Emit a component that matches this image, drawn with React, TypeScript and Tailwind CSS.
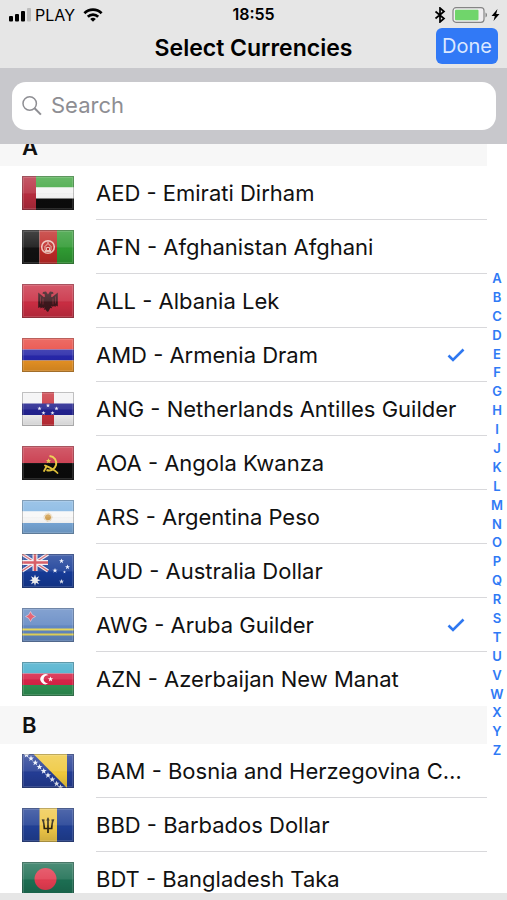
import { useId, useState } from 'react';
import type { ReactNode } from 'react';

interface Currency {
  code: string;
  name: string;
}

interface Section {
  letter: string;
  currencies: Currency[];
}

const SECTIONS: Section[] = [
  {
    letter: 'A',
    currencies: [
      { code: 'AED', name: 'Emirati Dirham' },
      { code: 'AFN', name: 'Afghanistan Afghani' },
      { code: 'ALL', name: 'Albania Lek' },
      { code: 'AMD', name: 'Armenia Dram' },
      { code: 'ANG', name: 'Netherlands Antilles Guilder' },
      { code: 'AOA', name: 'Angola Kwanza' },
      { code: 'ARS', name: 'Argentina Peso' },
      { code: 'AUD', name: 'Australia Dollar' },
      { code: 'AWG', name: 'Aruba Guilder' },
      { code: 'AZN', name: 'Azerbaijan New Manat' },
    ],
  },
  {
    letter: 'B',
    currencies: [
      { code: 'BAM', name: 'Bosnia and Herzegovina Convertible Marka' },
      { code: 'BBD', name: 'Barbados Dollar' },
      { code: 'BDT', name: 'Bangladesh Taka' },
    ],
  },
];

const LETTERS = 'ABCDEFGHIJKLMNOPQRSTUVWXYZ'.split('');

const STAR = 'M0-3 .8-1 3-.9 1.2.4 1.9 2.6 0 1.3-1.9 2.6-1.2.4-3-.9-.8-1z';

// All flags are drawn on a 52x34 canvas
const FLAGS: Record<string, ReactNode> = {
  AED: (
    <>
      <path d="M14 0h38v11.5H14z" fill="#3fa63f" />
      <path d="M14 11.5h38v11H14z" fill="#f4f4f4" />
      <path d="M14 22.5h38V34H14z" fill="#0c0c0c" />
      <path d="M0 0h14v34H0z" fill="#b52b3d" />
    </>
  ),
  AFN: (
    <>
      <path d="M0 0h17.5v34H0z" fill="#111" />
      <path d="M17.5 0H35v34H17.5z" fill="#bf2a27" />
      <path d="M35 0h17v34H35z" fill="#2f9a32" />
      <g fill="none" stroke="#efc4bc">
        <circle cx="26" cy="17" r="6.3" strokeWidth="1.6" />
        <path d="M23 20.5v-4l3-3 3 3v4zM24.5 20.5v-3h3v3M22.5 21.5h7M26 11.5v2" strokeWidth="1" />
      </g>
    </>
  ),
  ALL: (
    <>
      <path d="M0 0h52v34H0z" fill="#c92d42" />
      <path
        d="M26 10.500L24 7.500l-3 .5-.5 1.800 2 .2.500 2.500-1 .8-5.800-4.800v15.500l2-1 .3 1.500 2-1.300.3 1.300 2-1.200-1 2.500 2-.3.700 1.500L26 28l1.500-2.500.7-1.500 2 .3-1-2.500 2 1.200.3-1.300 2 1.300.3-1.500 2 1V8.500L30 13.300l-1-.8.5-2.500 2-.2L31 8l-3-.5z"
        fill="#3b171c"
      />
      <path d="M18.500 12.500v7M21 14.500v6M33.500 12.500v7M31 14.500v6" stroke="#8f2b38" strokeWidth=".7" />
    </>
  ),
  AMD: (
    <>
      <path d="M0 0h52v11.5H0z" fill="#e8443c" />
      <path d="M0 11.5h52v11H0z" fill="#2626a8" />
      <path d="M0 22.5h52V34H0z" fill="#ea9424" />
    </>
  ),
  ANG: (
    <>
      <path d="M0 0h52v34H0z" fill="#f3f3f4" />
      <path d="M20 0h12v34H20z" fill="#c8303a" />
      <path d="M0 11.5h52v11.5H0z" fill="#22228e" />
      <g fill="#e8e8fa">
        <path d={STAR} transform="translate(26 13.5) scale(.7)" />
        <path d={STAR} transform="translate(17.5 16.5) scale(.7)" />
        <path d={STAR} transform="translate(34.5 16.5) scale(.7)" />
        <path d={STAR} transform="translate(21.5 21) scale(.7)" />
        <path d={STAR} transform="translate(30.5 21) scale(.7)" />
      </g>
    </>
  ),
  AOA: (
    <>
      <path d="M0 0h52v17H0z" fill="#c62f42" />
      <path d="M0 17h52v17H0z" fill="#0b0b0b" />
      <path d="M27.5 10c5 .5 7.500 4.500 6.500 9-1 4-5 6.500-9.500 5" fill="none" stroke="#e9c93c" strokeWidth="2" />
      <path d="M23 19.500c3 1.200 9 3.500 12.500 7.500M24.500 20.500L22 25" fill="none" stroke="#e9c93c" strokeWidth="1.800" strokeLinecap="round" />
      <path d={STAR} fill="#e9c93c" transform="translate(26.500 15) scale(.9)" />
    </>
  ),
  ARS: (
    <>
      <path d="M0 0h52v11.500H0z" fill="#82b5e2" />
      <path d="M0 11.500h52v11.500H0z" fill="#f7f7f7" />
      <path d="M0 23h52v11H0z" fill="#79a9da" />
      <circle cx="26" cy="17.200" r="3" fill="#d3a254" />
      <circle cx="26" cy="17.200" r="3.900" fill="none" stroke="#dcb981" strokeWidth="1" strokeDasharray=".8 .7" />
    </>
  ),
  AUD: (
    <>
      <path d="M0 0h52v34H0z" fill="#153a96" />
      <path d="M0 0l26 17M26 0L0 17" stroke="#eceaf2" strokeWidth="3.400" />
      <path d="M0 0l26 17M26 0L0 17" stroke="#d25560" strokeWidth="1.200" />
      <path d="M13 0v17M0 8.500h26" stroke="#f0eef4" strokeWidth="5" />
      <path d="M13 0v17M0 8.500h26" stroke="#d0424c" strokeWidth="2.600" />
      <path d="M13 20.500l1 3.200 3-1.500-1.500 3 3.200 1-3.200 1 1.500 3-3-1.500-1 3.200-1-3.200-3 1.500 1.500-3-3.200-1 3.200-1-1.500-3 3 1.500z" fill="#fff" />
      <g fill="#eef2ff">
        <path d={STAR} transform="translate(39.500 7) scale(.85)" />
        <path d={STAR} transform="translate(45.500 13) scale(.85)" />
        <path d={STAR} transform="translate(33 16.500) scale(.85)" />
        <path d={STAR} transform="translate(39.500 27.500) scale(.85)" />
        <path d={STAR} transform="translate(42.500 18) scale(.5)" />
      </g>
    </>
  ),
  AWG: (
    <>
      <path d="M0 0h52v34H0z" fill="#6389c4" />
      <path d="M0 21.500h52M0 26.500h52" stroke="#ecdc5c" strokeWidth="2" />
      <path d="M8.500 3.500l1.800 3.200 3.200 1.800-3.200 1.800-1.800 3.200-1.800-3.200-3.200-1.800 3.200-1.800z" fill="#e0475a" stroke="#dfc3d4" strokeWidth=".7" />
    </>
  ),
  AZN: (
    <>
      <path d="M0 0h52v11.500H0z" fill="#41abca" />
      <path d="M0 11.500h52v11.500H0z" fill="#d72347" />
      <path d="M0 23h52v11H0z" fill="#2f9254" />
      <path d="M26.500 13.300a5 5 0 1 0 0 7.800 4 4 0 1 1 0-7.800z" fill="#fff" />
      <path d={STAR} fill="#fff" transform="translate(28.500 17.200) scale(.9)" />
    </>
  ),
  BAM: (
    <>
      <path d="M0 0h52v34H0z" fill="#233c94" />
      <path d="M11.500 0H45v34z" fill="#efc83c" />
      <g fill="#edf1fc">
        <path d={STAR} transform="translate(4.500 1)" />
        <path d={STAR} transform="translate(9 4.500)" />
        <path d={STAR} transform="translate(13.300 8.700)" />
        <path d={STAR} transform="translate(17.500 12.900)" />
        <path d={STAR} transform="translate(21.700 17.100)" />
        <path d={STAR} transform="translate(26 21.300)" />
        <path d={STAR} transform="translate(30.300 25.500)" />
        <path d={STAR} transform="translate(34.600 29.700)" />
        <path d={STAR} transform="translate(38.500 33.300)" />
      </g>
    </>
  ),
  BBD: (
    <>
      <path d="M0 0h52v34H0z" fill="#203f94" />
      <path d="M17.500 0H35v34H17.500z" fill="#efc747" />
      <path d="M26 10.500V25M20.500 12c1.500 1.500 1.500 4 1.800 8.500H29.700c.3-4.500.3-7 1.800-8.500" fill="none" stroke="#2d2512" strokeWidth="1.700" />
      <path d="M26 9l-1.700 3.500h3.400zM19.500 11.200l3.200.4-.8 2.800zM32.500 11.200l-3.200.4.8 2.800z" fill="#2d2512" />
    </>
  ),
  BDT: (
    <>
      <path d="M0 0h52v34H0z" fill="#1c6e52" />
      <circle cx="23.500" cy="17" r="11" fill="#e13c50" />
    </>
  ),
};

function Flag({ code }: { code: string }) {
  const shine = useId();

  return (
    <svg viewBox="0 0 52 34" className="h-[34px] w-[52px] shrink-0" aria-hidden="true">
      <defs>
        <linearGradient id={shine} x1="0" y1="0" x2="0" y2="1">
          <stop offset="0" stopColor="#fff" stopOpacity=".22" />
          <stop offset=".5" stopColor="#fff" stopOpacity=".1" />
          <stop offset=".55" stopColor="#000" stopOpacity="0" />
          <stop offset="1" stopColor="#000" stopOpacity=".14" />
        </linearGradient>
      </defs>
      {FLAGS[code]}
      <path d="M0 0h52v34H0z" fill={`url(#${shine})`} />
      <path d="M1.500 1.500h49v31h-49z" fill="none" stroke="#fff" strokeOpacity=".14" />
      <path d="M.5.5h51v33H.5z" fill="none" stroke="#444" strokeOpacity=".3" />
    </svg>
  );
}

function StatusBar() {
  return (
    <div className="grid h-7 grid-cols-[1fr_auto_1fr] items-center px-[7px] pt-px text-[16px] leading-none">
      <div className="flex items-center gap-1">
        <svg viewBox="0 0 24 14" className="h-[14px] w-6" aria-hidden="true">
          <rect x="2" y="8" width="4" height="5.500" rx="1" />
          <rect x="8" y="6" width="4" height="7.500" rx="1" />
          <rect x="14" y="3" width="4" height="10.500" rx="1" />
          <rect x="20" y="0" width="4" height="13.500" rx="1" fill="#bdbdbd" />
        </svg>
        <span>PLAY</span>
        <svg viewBox="0 0 20 14" className="ml-1 h-[14px] w-5" aria-hidden="true">
          <g fill="none" stroke="#000" strokeWidth="2.700">
            <path d="M1.400 5.200a12.200 12.200 0 0 1 17.200 0" />
            <path d="M4.800 8.700a7.400 7.400 0 0 1 10.400 0" />
          </g>
          <path d="M10 13.800L7.200 11a4 4 0 0 1 5.600 0z" />
        </svg>
      </div>
      <span className="pb-px font-semibold">18:55</span>
      <div className="flex items-center justify-end">
        <svg viewBox="0 0 12 16" className="mr-[6px] h-4 w-3" aria-hidden="true">
          <path d="M1.500 4.500l8.500 7L6 15V1l4 3.500-8.500 7" fill="none" stroke="#000" strokeWidth="1.700" />
        </svg>
        <svg viewBox="0 0 36 16" className="h-4 w-9" aria-hidden="true">
          <rect x="1" y=".7" width="31" height="14.600" rx="3" fill="#f0eef0" stroke="#858585" strokeWidth="1.200" />
          <rect x="3" y="2.700" width="23.500" height="10.600" rx="1" fill="#70d56b" />
          <path d="M33.500 5.500c2 .8 2 4.200 0 5z" fill="#858585" />
        </svg>
        <svg viewBox="0 0 9 14" className="ml-[3px] h-[14px] w-[9px]" aria-hidden="true">
          <path d="M6.500 1L.5 8h3.300L2.500 13l6-7H5.200z" />
        </svg>
      </div>
    </div>
  );
}

function SearchBar() {
  return (
    <div className="bg-[#c8c8cc] py-[14px] pr-[11px] pl-[12px]">
      <label className="flex h-12 items-center gap-[7px] rounded-[14px] bg-white px-[10px]">
        <svg viewBox="0 0 22 22" className="h-[22px] w-[22px] shrink-0" fill="none" stroke="#8e8e93" aria-hidden="true">
          <circle cx="7.700" cy="8.500" r="6.700" strokeWidth="1.500" />
          <path d="M12.600 13.300l6.300 6.300" strokeWidth="2" />
        </svg>
        <input
          type="text"
          aria-label="Search"
          placeholder="Search"
          className="min-w-0 flex-1 bg-transparent pb-[2px] text-[22px] outline-none placeholder:text-[#8e8e93]"
        />
      </label>
    </div>
  );
}

interface CurrencyRowProps {
  currency: Currency;
  checked: boolean;
  divider: boolean;
  onToggle: () => void;
}

function CurrencyRow({ currency, checked, divider, onToggle }: CurrencyRowProps) {
  return (
    <li>
      <label className="relative flex h-[54px] items-center gap-[22px] pl-[22px]">
        <input type="checkbox" className="sr-only" checked={checked} onChange={onToggle} />
        <Flag code={currency.code} />
        <span
          className={`flex h-full min-w-0 flex-1 items-center border-b pt-px pr-[22px] ${
            divider ? 'border-[#d8d8db]' : 'border-transparent'
          }`}
        >
          <span className="flex-1 truncate">
            {currency.code} - {currency.name}
          </span>
          {checked && (
            <svg viewBox="0 0 18 14" className="h-[14px] w-[18px] shrink-0" aria-hidden="true">
              <path d="M1.500 7.500l4.500 4.500L16.500 1.500" fill="none" stroke="#2f78f0" strokeWidth="2.600" />
            </svg>
          )}
        </span>
      </label>
    </li>
  );
}

export default function App() {
  const [selected, setSelected] = useState<string[]>(['AMD', 'AWG']);

  const toggle = (code: string) => {
    setSelected(prev => (prev.includes(code) ? prev.filter(c => c !== code) : [...prev, code]));
  };

  return (
    <div className="flex h-screen flex-col bg-white font-['Inter',sans-serif] text-black">
      <header className="shrink-0 bg-[#e6e6e6]">
        <StatusBar />
        <div className="grid h-10 grid-cols-[1fr_auto_1fr] items-center pr-[9px]">
          <h1 className="col-start-2 pl-[9px] text-[23px] font-semibold">Select Currencies</h1>
          <button
            type="button"
            className="h-9 w-[62px] self-start justify-self-end rounded-md bg-[#3179f6] text-[20px] text-[#dbe8ff]"
          >
            Done
          </button>
        </div>
        <SearchBar />
      </header>

      <main className="flex min-h-0 flex-1">
        <div className="min-w-0 flex-1 overflow-y-auto text-[22px] text-[#111] [scrollbar-width:none]">
          {/* List rests slightly scrolled, with the first heading under the search bar */}
          <div className="-mt-4">
            {SECTIONS.map(section => (
              <section key={section.letter} id={`section-${section.letter}`}>
                <h2 className="flex h-[38px] items-center bg-[#f7f7f7] px-[22px] pt-px font-semibold">
                  {section.letter}
                </h2>
                <ul>
                  {section.currencies.map((currency, index) => (
                    <CurrencyRow
                      key={currency.code}
                      currency={currency}
                      checked={selected.includes(currency.code)}
                      divider={index < section.currencies.length - 1}
                      onToggle={() => toggle(currency.code)}
                    />
                  ))}
                </ul>
              </section>
            ))}
          </div>
        </div>

        {/* Alphabet index */}
        <nav
          aria-label="Alphabet index"
          className="mb-2 flex h-[491px] w-5 flex-col self-center text-center text-[13px] leading-[19px] font-semibold text-[#2f7af5]"
        >
          {LETTERS.map(letter => (
            <a key={letter} href={`#section-${letter}`} className="min-h-0 flex-1">
              {letter}
            </a>
          ))}
        </nav>
      </main>

      <footer className="h-[7px] shrink-0 bg-[#e6e6e6]" />
    </div>
  );
}
